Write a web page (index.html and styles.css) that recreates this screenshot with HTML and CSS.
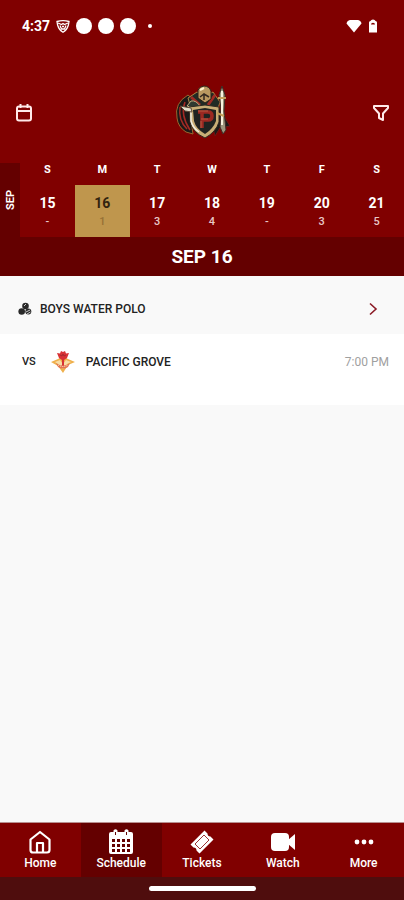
FILE: index.html
```html
<!DOCTYPE html>
<html lang="en">
<head>
    <meta charset="UTF-8">
    <meta name="viewport" content="width=device-width, initial-scale=1.0">
    <title>Schedule</title>
    <link rel="stylesheet" href="styles.css">
</head>
<body>
    <div class="status-bar">
        <span class="clock">4:37</span>
        <svg class="shield" width="14" height="13" viewBox="0 0 14 13" fill="none" stroke="#fff" stroke-width="1.3">
            <path d="M1 1.5Q7 -.2 13 1.5L12.4 5Q11 10 7 12.2Q3 10 1.6 5Z"/>
            <path d="M2 3L5.5 4.5L7 3.5L8.5 4.5L12 3M4 5.5L5.5 9H8.5L10 5.5M6 6.5H8"/>
        </svg>
        <span class="dot"></span>
        <span class="dot"></span>
        <span class="dot"></span>
        <span class="small-dot"></span>
        <svg class="wifi" width="16" height="14" viewBox="0 0 16 14" fill="#fff">
            <path d="M.5 4.5Q1 1.5 4 1H12Q15 1.5 15.5 4.5L8 13.5Z"/>
        </svg>
        <svg width="10" height="14" viewBox="0 0 10 14">
            <path fill="#fff" d="M1 3.5Q1 2 2.500 2Q3 .5 5 .5T7.500 2Q9 2 9 3.500V13.500H1Z"/>
            <path fill="#800000" d="M3 5.500Q3 3.800 5 3.800T7 5.500Z"/>
        </svg>
    </div>

    <header class="header">
        <button class="icon-btn" aria-label="Pick a date">
            <svg width="18" height="20" viewBox="0 0 18 20" fill="none" stroke="#ffe9e9" stroke-width="2">
                <rect x="2" y="3.5" width="14" height="14" rx="2"/>
                <path d="M2 8H16M5.500 1V5M12.500 1V5"/>
            </svg>
        </button>
        <svg class="crest" width="60" height="60" viewBox="0 0 60 60">
            <path d="M15 13Q1 21 4 36Q5 45 13 50L20 52L17 33L22 19Z" fill="#1b1918" stroke="#97682f"/>
            <path d="M7 25Q5 38 14 47M12 20Q7 33 17 48" fill="none" stroke="#a32a25" stroke-width="1.5"/>
            <path d="M43 18L49 31L57 44L47 46L42 54L38 39Z" fill="#1b1918" stroke="#6d1712"/>
            <path d="M15 16L24 10L32 14L40 10L47 20L44 30H19Z" fill="#202b25" stroke="#ae8443"/>
            <path d="M18 15L27 23M42 13L35 23" stroke="#a02b24" stroke-width="3"/>
            <path d="M25 8Q27 4 31 4Q36 4 38 9V17L32 21L25 16Z" fill="#b99861" stroke="#2a2118"/>
            <path d="M27 15L31 12L36 15M31 12V18" fill="none" stroke="#332820" stroke-width="1.5"/>
            <path d="M27 8L31 6" stroke="#fff3cd" stroke-width="2"/>
            <path d="M18 19Q23 18 27 24L20 26L14 24Z" fill="#303a31" stroke="#c3ae80"/>
            <path d="M16 25L32 23L46 25V40Q43 50 32 56Q19 50 17 40Z" fill="#c8ae76" stroke="#302a22"/>
            <path d="M20 28L32 26L43 28V39Q40 47 32 52Q23 47 21 39Z" fill="#202321"/>
            <path d="M18 27V39Q20 46 26 50" fill="none" stroke="#f0eee3" stroke-width="1.5"/>
            <path d="M25 30H35Q39 30 39 34T35 38H29M29 30V46" fill="none" stroke="#9c2922" stroke-width="3.5"/>
            <path d="M25 29H35M28 37H35M28 39V46" fill="none" stroke="#c4674d" stroke-width=".8"/>
            <path d="M7 24L18 26L19 30L12 29Z" fill="#e2ddca" stroke="#5e4938"/>
            <path d="M49 4L52 13L51 29L53 48L50 52L47 45L48 27L46 13Z" fill="#9c967e" stroke="#3d2d27"/>
            <path d="M49 9V43" stroke="#f7f3df" stroke-width="2"/>
            <path d="M45 16H53M44 31L51 34" stroke="#c5a05b" stroke-width="2"/>
        </svg>
        <button class="icon-btn" aria-label="Filter">
            <svg width="18" height="18" viewBox="0 0 18 18" fill="none" stroke="#ffe9e9" stroke-width="2" stroke-linejoin="round">
                <path d="M2 2H16V4L11 9.500V16L7 14V9.500L2 4Z"/>
            </svg>
        </button>
    </header>

    <section class="week">
        <div class="month"><span>SEP</span></div>
        <div class="days">
            <button class="day"><span class="weekday">S</span><span class="cell"><b>15</b><small>-</small></span></button>
            <button class="day selected"><span class="weekday">M</span><span class="cell"><b>16</b><small>1</small></span></button>
            <button class="day"><span class="weekday">T</span><span class="cell"><b>17</b><small>3</small></span></button>
            <button class="day"><span class="weekday">W</span><span class="cell"><b>18</b><small>4</small></span></button>
            <button class="day"><span class="weekday">T</span><span class="cell"><b>19</b><small>-</small></span></button>
            <button class="day"><span class="weekday">F</span><span class="cell"><b>20</b><small>3</small></span></button>
            <button class="day"><span class="weekday">S</span><span class="cell"><b>21</b><small>5</small></span></button>
        </div>
    </section>
    <h1 class="date-title">SEP 16</h1>

    <main class="schedule">
        <a href="#" class="sport">
            <svg width="14" height="14" viewBox="0 0 14 14">
                <g fill="#292929">
                    <circle cx="7.5" cy="4" r="3.3"/>
                    <circle cx="3.7" cy="9.5" r="3.3"/>
                    <circle cx="10.3" cy="9.5" r="3"/>
                </g>
                <path d="M6 4L8 2M8 10L12 8M9 12L12.500 10" stroke="#ccc" fill="none"/>
            </svg>
            <span class="sport-name">BOYS WATER POLO</span>
            <svg width="10" height="14" viewBox="0 0 10 14" fill="none" stroke="#8b1a25" stroke-width="1.6">
                <path d="M2 1.500L8 7L2 12.500"/>
            </svg>
        </a>
        <div class="game">
            <span class="versus">VS</span>
            <svg class="team-logo" width="24" height="24" viewBox="0 0 24 24">
                <path d="M0 12L7 9L12 6L17 9L24 12L17 15L12 23L7 16Z" fill="#efb04c"/>
                <path d="M4 12L9 10L12 14L15 10L20 12L16 14L12 19L8 15Z" fill="#f8dda5"/>
                <path d="M6 3L9 3.500L10 1L12 2L14 1L15 3.500L18 3L16 8L13 10V16H11V10L8 8Z" fill="#d83134"/>
                <path d="M9 5L11 6L12 4L13 6L15 5" fill="none" stroke="#9c262d" stroke-width=".8"/>
                <path d="M5 13Q12 18 19 13L17 17Q12 20 7 17Z" fill="#e37350"/>
                <path d="M7 15Q12 18 17 15" fill="none" stroke="#fff0cf" stroke-dasharray="1 1"/>
            </svg>
            <span class="team-name">PACIFIC GROVE</span>
            <time class="game-time">7:00 PM</time>
        </div>
    </main>

    <nav class="tabs">
        <a href="#" class="tab">
            <svg width="26" height="26" viewBox="0 0 26 26" fill="none" stroke="#fff" stroke-width="2.2" stroke-linejoin="round">
                <path d="M3.500 10.500L13 3L22.500 10.500V21Q22.500 23.500 20 23.500H6Q3.500 23.500 3.500 21Z"/>
                <path d="M10 23V14H16V23"/>
            </svg>
            <span>Home</span>
        </a>
        <a href="#" class="tab active">
            <svg width="26" height="26" viewBox="0 0 26 26">
                <path fill="#fff" d="M3 3H5.500V1.500Q7.500 -1 9.500 1.500V3H16.500V1.500Q18.500 -1 20.500 1.500V3H23Q25 3 25 5V23Q25 25 23 25H3Q1 25 1 23V5Q1 3 3 3Z"/>
                <path stroke="#640000" stroke-width="3" stroke-dasharray="3 2" d="M4 11.500H22M4 16.500H22M4 21.500H22"/>
                <path stroke="#640000" d="M7.500 3V6M18.500 3V6"/>
            </svg>
            <span>Schedule</span>
        </a>
        <a href="#" class="tab">
            <svg width="26" height="26" viewBox="0 0 26 26">
                <path fill="#fff" d="M15.500 1.500L18.500 4.500Q18.500 7.500 21.500 7.500L24.500 10.500L10.500 24.500L7.500 21.500Q7.500 18.500 4.500 18.500L1.500 15.500Z"/>
                <path d="M15 6L20 11L11 20L6 15Z" fill="none" stroke="#800000" stroke-width=".8"/>
            </svg>
            <span>Tickets</span>
        </a>
        <a href="#" class="tab">
            <svg width="26" height="26" viewBox="0 0 26 26" fill="#fff">
                <rect x="1" y="4" width="18" height="18" rx="4"/>
                <path d="M18 11L25 5V21L18 15Z"/>
            </svg>
            <span>Watch</span>
        </a>
        <a href="#" class="tab">
            <svg width="26" height="26" viewBox="0 0 26 26" fill="#fff">
                <circle cx="6" cy="13" r="2.4"/>
                <circle cx="13" cy="13" r="2.4"/>
                <circle cx="20" cy="13" r="2.4"/>
            </svg>
            <span>More</span>
        </a>
    </nav>
    <div class="gesture-bar"><span></span></div>
</body>
</html>
```
FILE: styles.css
```css
* {
    box-sizing: border-box;
}

body {
    margin: 0;
    min-height: 100vh;
    display: flex;
    flex-direction: column;
    background-color: #f9f9f9;
    font-family: Roboto, sans-serif;
    color: #222;
}

a {
    color: inherit;
    text-decoration: none;
}

button {
    padding: 0;
    border: none;
    background: none;
    color: inherit;
    font-family: inherit;
    cursor: pointer;
}

svg {
    display: block;
    flex-shrink: 0;
}

.status-bar {
    display: flex;
    align-items: center;
    gap: 6px;
    height: 52px;
    padding: 0 26px 0 22px;
    background-color: #800000;
    color: #fff;
}

.clock {
    font-size: 14px;
    font-weight: bold;
}

.dot {
    width: 16px;
    height: 16px;
    border-radius: 50%;
    background-color: #fff;
}

.small-dot {
    width: 4px;
    height: 4px;
    margin-left: 6px;
    border-radius: 50%;
    background-color: #fff;
}

.wifi {
    margin-left: auto;
}

.header {
    display: flex;
    align-items: center;
    justify-content: space-between;
    padding: 30px 14px 21px 15px;
    background-color: #800000;
}

.icon-btn {
    padding-top: 2px;
}

.week {
    display: flex;
    background-color: #800000;
    color: #fff;
}

.month {
    display: flex;
    align-items: center;
    justify-content: center;
    width: 20px;
    background-color: #640000;
    font-size: 11px;
    font-weight: bold;
}

.month span {
    writing-mode: vertical-rl;
    rotate: 180deg;
}

.days {
    flex: 1;
    display: grid;
    grid-template-columns: repeat(7, 1fr);
}

.weekday {
    display: block;
    height: 22px;
    font-size: 11px;
    font-weight: bold;
    line-height: 14px;
}

.cell {
    display: block;
    height: 52px;
    padding-top: 8px;
}

.cell b {
    display: block;
    font-size: 14px;
    line-height: 20px;
}

.cell small {
    display: block;
    color: #e8c8c8;
    font-size: 11px;
    font-weight: 500;
    line-height: 18px;
}

.selected .cell {
    background-color: #bf964d;
    color: #33240f;
}

.selected small {
    color: #967035;
}

.date-title {
    margin: 0;
    background-color: #640000;
    color: #fff;
    font-size: 19px;
    line-height: 39px;
    text-align: center;
}

.schedule {
    flex: 1;
}

.sport {
    display: flex;
    align-items: center;
    gap: 8px;
    height: 58px;
    padding: 8px 26px 0 18px;
}

.sport-name {
    flex: 1;
    font-size: 12px;
    font-weight: 500;
}

.game {
    display: flex;
    align-items: center;
    height: 71px;
    padding: 0 15px 16px 22px;
    background-color: #fff;
}

.versus {
    font-size: 11px;
    font-weight: 500;
}

.team-logo {
    margin: 0 11px 0 15px;
}

.team-name {
    flex: 1;
    font-size: 12px;
    font-weight: 500;
}

.game-time {
    color: #a0a0a0;
    font-size: 12px;
}

.tabs {
    display: grid;
    grid-template-columns: repeat(5, 1fr);
    border-top: 1px solid #b89090;
    background-color: #800000;
    color: #fff;
}

.tab {
    display: flex;
    flex-direction: column;
    align-items: center;
    height: 54px;
    padding-top: 6px;
    font-size: 12px;
    font-weight: 500;
    line-height: 16px;
}

.tab.active {
    background-color: #640000;
}

.gesture-bar {
    display: flex;
    justify-content: center;
    align-items: center;
    height: 23px;
    background-color: #4f0d0d;
}

.gesture-bar span {
    width: 107px;
    height: 5px;
    border-radius: 3px;
    background-color: #fff;
}
```
